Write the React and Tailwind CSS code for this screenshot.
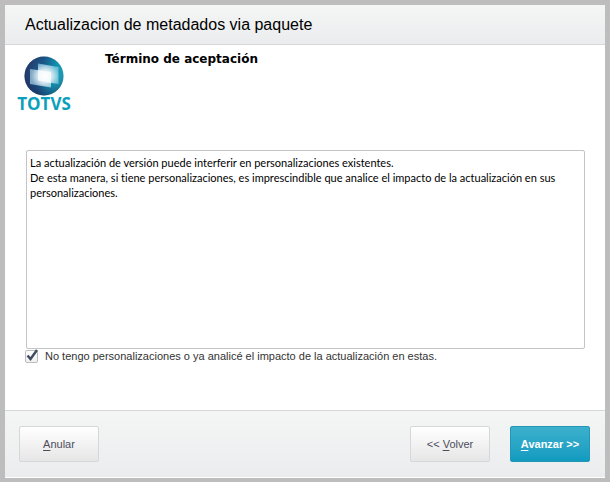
import React, { useState } from 'react';

const TERMS = `La actualización de versión puede interferir en personalizaciones existentes.
De esta manera, si tiene personalizaciones, es imprescindible que analice el impacto de la actualización en sus personalizaciones.`;

const Logo = () => (
  <div className="w-14 shrink-0 flex flex-col items-center">
    <svg viewBox="0 0 40 40" className="w-10 h-10" aria-hidden="true">
      <defs>
        <linearGradient id="ball" x1="0" y1="0.4" x2="1" y2="0.6">
          <stop offset="0" stopColor="#2a4a78" />
          <stop offset="0.4" stopColor="#1b5487" />
          <stop offset="0.75" stopColor="#118fae" />
          <stop offset="1" stopColor="#22a5ba" />
        </linearGradient>
        <radialGradient id="shade" cx="0.6" cy="0.4" r="0.65">
          <stop offset="0.5" stopColor="#1b2858" stopOpacity="0" />
          <stop offset="1" stopColor="#1b2858" stopOpacity="0.65" />
        </radialGradient>
        <radialGradient id="glow">
          <stop offset="0" stopColor="#ffffff" />
          <stop offset="0.5" stopColor="#ffffff" stopOpacity="0.7" />
          <stop offset="1" stopColor="#ffffff" stopOpacity="0" />
        </radialGradient>
        <clipPath id="sheets">
          <path d="M14 7.500 L34.500 11 L34.500 28 L27 27 L27 31.500 L6 28 L6 13 L14 14 Z" />
        </clipPath>
      </defs>
      <circle cx="20" cy="20" r="19.500" fill="url(#ball)" />
      <circle cx="20" cy="20" r="19.500" fill="url(#shade)" />
      <path d="M14 7.500 L34.500 11 L34.500 28 L14 24.500 Z" fill="#8fd0e8" fillOpacity="0.7" />
      <path d="M6 13 L27 16 L27 31.500 L6 28 Z" fill="#a9d3ea" fillOpacity="0.7" />
      <path d="M14 14 L27 16 L27 27 L14 24.500 Z" fill="#ffffff" fillOpacity="0.6" />
      <ellipse cx="21" cy="20" rx="14" ry="13" fill="url(#glow)" clipPath="url(#sheets)" />
    </svg>
    <span className="font-['Open_Sans',sans-serif] text-[17px] leading-4 font-bold text-[#0a9fbd]">TOTVS</span>
  </div>
);

const FooterButton = ({ primary, onClick, children }) => (
  <button
    type="button"
    onClick={onClick}
    className={
      primary
        ? 'w-20 h-9 rounded-xs border border-[#2596b4] bg-linear-to-b from-[#3bb0cd] to-[#0f9bc0] font-bold text-white'
        : 'w-20 h-9 rounded-xs border border-[#d6d7d7] bg-linear-to-b from-white to-[#e6e6e7] text-[#4c4d5c]'
    }
  >
    {children}
  </button>
);

export default function App() {
  const [accepted, setAccepted] = useState(true);

  return (
    <div className="min-h-screen flex flex-col bg-[#bdbdbd] px-[5px] pt-[5px] pb-1 font-['Liberation_Sans',Arial,sans-serif] text-[11px]">
      <div className="flex-1 flex flex-col bg-white pb-px">
        <header className="h-10 px-5 flex items-center border-b border-[#d6d7d8] bg-linear-to-b from-[#f4f6f5] to-[#ebecee]">
          <h1 className="text-base text-black">Actualizacion de metadados via paquete</h1>
        </header>

        <main className="flex-1 flex flex-col px-5 pb-[46px]">
          <div className="flex items-start h-[105px] pt-[11px] -ml-[9px] gap-[33px]">
            <Logo />
            <h2 className="-mt-[5px] font-['DejaVu_Sans',Verdana,sans-serif] text-xs leading-4 font-bold text-black">
              Término de aceptación
            </h2>
          </div>
          <textarea
            readOnly
            aria-label="Término de aceptación"
            value={TERMS}
            className="flex-1 ml-px resize-none rounded-xs border border-[#c3c4c5] bg-white p-1 pl-[3px] font-['Lato',sans-serif] text-[11px] leading-[15px] [font-variant-ligatures:none] text-black outline-none"
          />
          <label className="flex items-center gap-[7px] h-[15px] text-[#333333]">
            <span className="grid shrink-0">
              <input
                type="checkbox"
                checked={accepted}
                onChange={(e) => setAccepted(e.target.checked)}
                className="col-start-1 row-start-1 appearance-none size-[13px] rounded-xs border border-[#bcbdc0] bg-linear-to-b from-white to-[#f0f0f1]"
              />
              {accepted && (
                <svg viewBox="0 0 13 13" className="col-start-1 row-start-1 size-[13px] overflow-visible pointer-events-none" aria-hidden="true">
                  <path d="M2.500 5.500 L5.500 9 L12 0" fill="none" stroke="#414a5e" strokeWidth="2.400" />
                </svg>
              )}
            </span>
            No tengo personalizaciones o ya analicé el impacto de la actualización en estas.
          </label>
        </main>

        <footer className="flex items-center pl-[14px] pr-[15px] h-[67px] border-t border-[#d6d7d8] bg-linear-to-b from-[#f4f6f5] to-[#ebecee]">
          <FooterButton>
            <u className="underline-offset-2">A</u>nular
          </FooterButton>
          <div className="ml-auto flex gap-5">
            <FooterButton>
              &lt;&lt; <u className="underline-offset-2">V</u>olver
            </FooterButton>
            <FooterButton primary>
              <u className="underline-offset-2">A</u>vanzar &gt;&gt;
            </FooterButton>
          </div>
        </footer>
      </div>
    </div>
  );
}
